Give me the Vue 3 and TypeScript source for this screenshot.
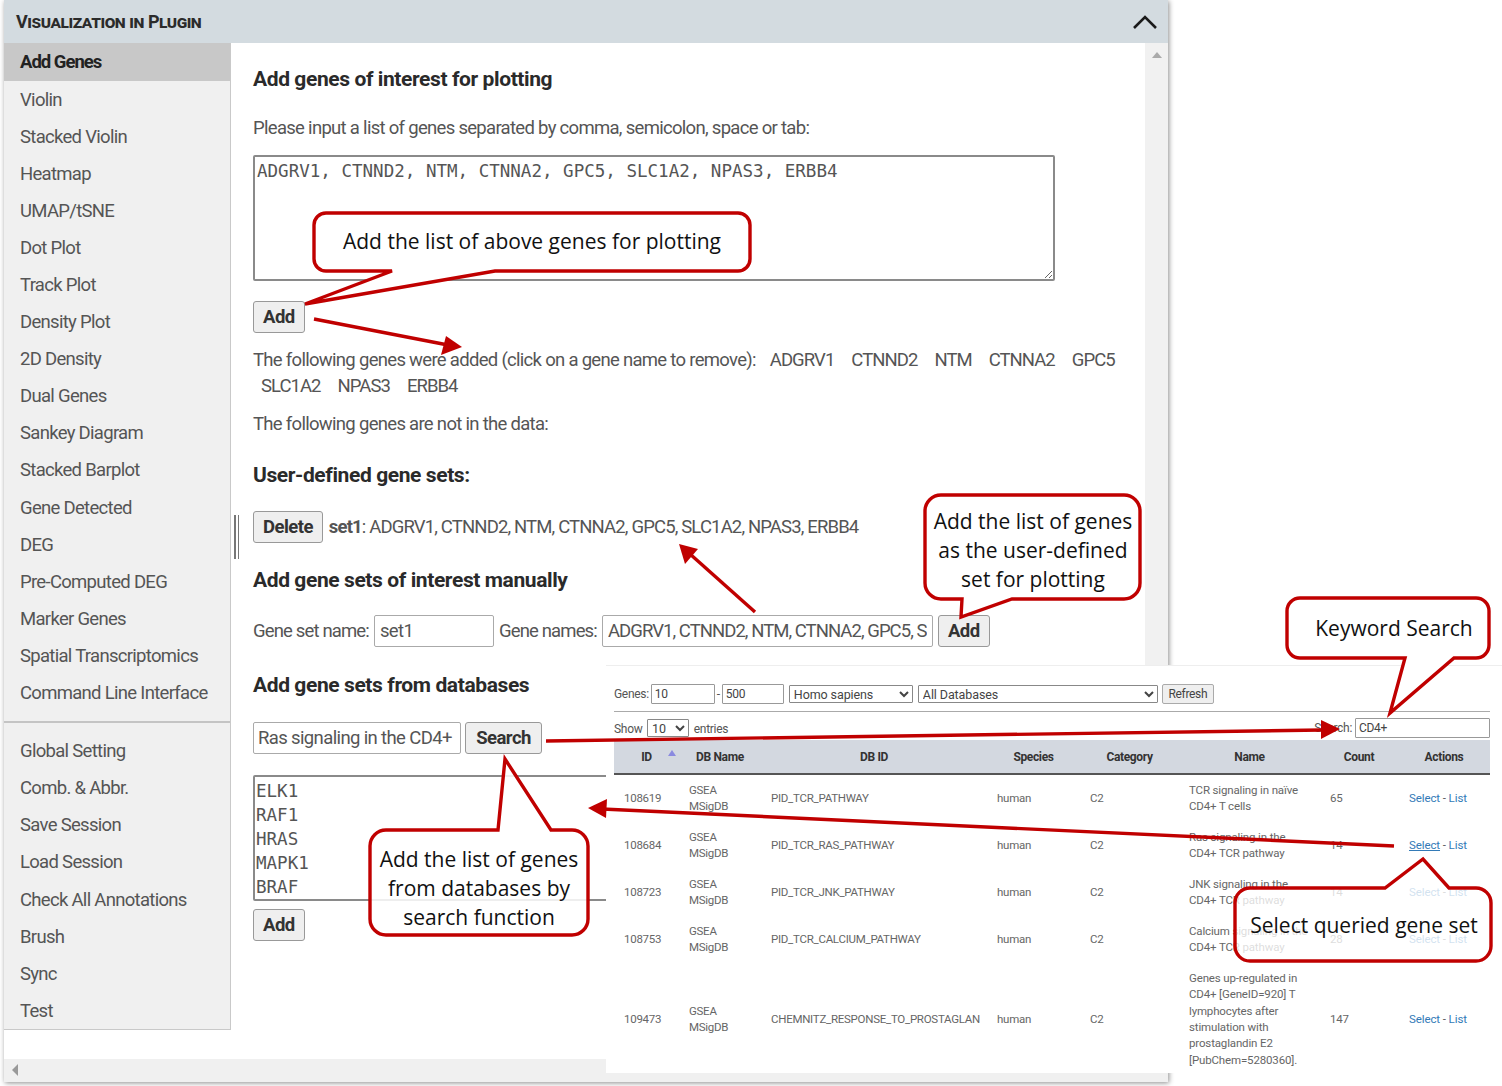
<script setup lang="ts">
const navTop: string[] = ['Violin','Stacked Violin','Heatmap','UMAP/tSNE','Dot Plot','Track Plot','Density Plot','2D Density','Dual Genes','Sankey Diagram','Stacked Barplot','Gene Detected','DEG','Pre-Computed DEG','Marker Genes','Spatial Transcriptomics','Command Line Interface']
const navBottom: string[] = ['Global Setting','Comb. & Abbr.','Save Session','Load Session','Check All Annotations','Brush','Sync','Test']
const headers: string[] = ['ID','DB Name','DB ID','Species','Category','Name','Count','Actions']
interface Row { id: string; dbId: string; name: string[]; count: string; hot?: boolean }
const rows: Row[] = [
  { id: '108619', dbId: 'PID_TCR_PATHWAY', name: ['TCR signaling in naïve', 'CD4+ T cells'], count: '65' },
  { id: '108684', dbId: 'PID_TCR_RAS_PATHWAY', name: ['Ras signaling in the', 'CD4+ TCR pathway'], count: '14', hot: true },
  { id: '108723', dbId: 'PID_TCR_JNK_PATHWAY', name: ['JNK signaling in the', 'CD4+ TCR pathway'], count: '14' },
  { id: '108753', dbId: 'PID_TCR_CALCIUM_PATHWAY', name: ['Calcium signaling in the', 'CD4+ TCR pathway'], count: '28' },
  { id: '109473', dbId: 'CHEMNITZ_RESPONSE_TO_PROSTAGLAN', name: ['Genes up-regulated in', 'CD4+ [GeneID=920] T', 'lymphocytes after', 'stimulation with', 'prostaglandin E2', '[PubChem=5280360].'], count: '147' }
]
const red = '#c00000'
</script>

<template>
  <div class="page">
    <section class="panel">
      <header class="panel-head">
        <span class="panel-title">Visualization in Plugin</span>
        <svg class="chev" width="26" height="16" viewBox="0 0 26 16"><polyline points="2,14 13,3 24,14" fill="none" stroke="#1a1a1a" stroke-width="2.6"/></svg>
      </header>
      <div class="panel-body">
        <aside class="side">
          <nav class="nav">
            <a class="nav-item active">Add Genes</a>
            <a v-for="n in navTop" :key="n" class="nav-item">{{ n }}</a>
            <div class="nav-rule"></div>
            <a v-for="n in navBottom" :key="n" class="nav-item">{{ n }}</a>
          </nav>
        </aside>
        <div class="splitter"><i></i><i></i></div>
        <main class="content">
          <h3 class="h first">Add genes of interest for plotting</h3>
          <p class="p prompt">Please input a list of genes separated by comma, semicolon, space or tab:</p>
          <textarea class="ta ta-main" readonly>ADGRV1, CTNND2, NTM, CTNNA2, GPC5, SLC1A2, NPAS3, ERBB4</textarea>
          <button class="btn add1">Add</button>
          <p class="p added">The following genes were added (click on a gene name to remove):<span class="g g1">ADGRV1</span><span class="g">CTNND2</span><span class="g">NTM</span><span class="g">CTNNA2</span><span class="g">GPC5</span><br><span class="g first-g">SLC1A2</span><span class="g">NPAS3</span><span class="g">ERBB4</span></p>
          <p class="p notin">The following genes are not in the data:</p>
          <h3 class="h ud">User-defined gene sets:</h3>
          <div class="row del"><button class="btn">Delete</button><span class="p tight"><b>set1</b>: ADGRV1, CTNND2, NTM, CTNNA2, GPC5, SLC1A2, NPAS3, ERBB4</span></div>
          <h3 class="h man">Add gene sets of interest manually</h3>
          <div class="row manual">
            <span class="p tight">Gene set name:</span>
            <input class="inp i-name" value="set1" readonly>
            <span class="p tight">Gene names:</span>
            <input class="inp i-genes" value="ADGRV1, CTNND2, NTM, CTNNA2, GPC5, SLC1A2" readonly>
            <button class="btn">Add</button>
          </div>
          <h3 class="h dbh">Add gene sets from databases</h3>
          <div class="row search">
            <input class="inp i-search" value="Ras signaling in the CD4+" readonly>
            <button class="btn btn-search">Search</button>
          </div>
          <textarea class="ta ta-db" readonly>ELK1
RAF1
HRAS
MAPK1
BRAF</textarea>
          <button class="btn add2">Add</button>
        </main>
        <div class="vscroll"><span class="tri-up"></span></div>
      </div>
      <div class="hscroll"><span class="tri-left"></span></div>
    </section>

    <section class="inset">
      <div class="filters">
        <label>Genes:</label><input class="mini w64" value="10" readonly>
        <span>-</span><input class="mini w62" value="500" readonly>
        <select class="sel w124"><option>Homo sapiens</option></select>
        <select class="sel w240"><option>All Databases</option></select>
        <button class="refresh">Refresh</button>
      </div>
      <div class="tools">
        <div class="tools-l">Show <select class="sel w44"><option>10</option></select> entries</div>
        <div class="tools-r">Search: <input class="mini w135" value="CD4+" readonly></div>
      </div>
      <table class="tbl">
        <colgroup>
          <col style="width:65px"><col style="width:82px"><col style="width:226px"><col style="width:93px"><col style="width:99px"><col style="width:141px"><col style="width:78px"><col style="width:92px">
        </colgroup>
        <thead>
          <tr><th v-for="(h, i) in headers" :key="h">{{ h }}<span v-if="i === 0" class="sort"></span></th></tr>
        </thead>
        <tbody>
          <tr v-for="r in rows" :key="r.id">
            <td>{{ r.id }}</td>
            <td>GSEA<br>MSigDB</td>
            <td class="nw">{{ r.dbId }}</td>
            <td>human</td>
            <td>C2</td>
            <td class="nm"><template v-for="(l, i) in r.name" :key="i"><span class="nwl">{{ l }}</span><br></template></td>
            <td>{{ r.count }}</td>
            <td class="act"><a :class="{ hot: r.hot }">Select</a> - <a>List</a></td>
          </tr>
        </tbody>
      </table>
    </section>

    <svg class="marks" width="1502" height="1086" viewBox="0 0 1502 1086">
      <g :fill="red" :stroke="red" stroke-width="3.4">
        <line x1="314" y1="319" x2="448" y2="345"/>
        <polygon points="462,347 446,336 441,355" stroke="none"/>
        <line x1="755" y1="612" x2="690" y2="554"/>
        <polygon points="679,544 698,549 685,564" stroke="none"/>
        <line x1="546" y1="741" x2="1322" y2="730"/>
        <polygon points="1340,729 1321,720 1321,739" stroke="none"/>
        <line x1="1394" y1="846" x2="602" y2="809"/>
        <polygon points="588,808 607,799 606,818" stroke="none"/>
      </g>
      <g fill="#fff" :stroke="red" stroke-width="3.4" stroke-linejoin="miter">
        <path d="M326 213H738a12 12 0 0 1 12 12V259a12 12 0 0 1 -12 12H495L305 304L392 271H326a12 12 0 0 1 -12 -12V225a12 12 0 0 1 12 -12Z"/>
        <path d="M941 495H1124a16 16 0 0 1 16 16V583a16 16 0 0 1 -16 16H1012L961 617L962 599H941a16 16 0 0 1 -16 -16V511a16 16 0 0 1 16 -16Z"/>
        <path d="M1300 598H1476a13 13 0 0 1 13 13V645a13 13 0 0 1 -13 13H1454L1390 713L1405 658H1300a13 13 0 0 1 -13 -13V611a13 13 0 0 1 13 -13Z"/>
        <path fill-opacity=".78" d="M1250 888H1385L1423 859L1449 888H1476a15 15 0 0 1 15 15V946a15 15 0 0 1 -15 15H1250a15 15 0 0 1 -15 -15V903a15 15 0 0 1 15 -15Z"/>
        <path fill-opacity=".85" d="M386 830H498L505 759L551 830H572a16 16 0 0 1 16 16V919a16 16 0 0 1 -16 16H386a16 16 0 0 1 -16 -16V846a16 16 0 0 1 16 -16Z"/>
      </g>
      <g class="note" text-anchor="middle">
        <text x="532" y="249">Add the list of above genes for plotting</text>
        <text x="1033" y="529">Add the list of genes</text>
        <text x="1033" y="558">as the user-defined</text>
        <text x="1033" y="587">set for plotting</text>
        <text x="1394" y="636">Keyword Search</text>
        <text x="1364" y="933">Select queried gene set</text>
        <text x="479" y="867">Add the list of genes</text>
        <text x="479" y="896">from databases by</text>
        <text x="479" y="925">search function</text>
      </g>
    </svg>
  </div>
</template>

<style>
html, body { margin: 0; background: #fff; }
</style>

<style scoped>
.page { position: relative; width: 1502px; height: 1086px; overflow: hidden; font-family: Roboto, "Liberation Sans", sans-serif; color: #555; background: #fff; }
.panel { width: 1164px; height: 1082px; margin-left: 4px; box-shadow: 1px 1px 5px rgba(0,0,0,.45); display: flex; flex-direction: column; background: #fff; }
.panel-head { height: 43px; flex: none; background: #d3dbe0; display: flex; align-items: center; justify-content: space-between; padding: 0 10px 0 12px; box-sizing: border-box; }
.panel-title { font-variant: small-caps; font-weight: 700; font-size: 18px; letter-spacing: -.45px; color: #2b2b2b; }
.panel-body { flex: 1; display: flex; min-height: 0; }
.side { width: 227px; flex: none; background: #fff; }
.nav { background: #f0f0f0; border-right: 1px solid #c9c9c9; border-bottom: 1px solid #c9c9c9; height: 987px; box-sizing: border-box; }
.nav-item { display: flex; align-items: center; height: 37.1px; padding-left: 16px; font-size: 18.5px; letter-spacing: -.7px; color: #555; }
.nav-item.active { background: #c8c8c8; color: #222; font-weight: 700; height: 38px; letter-spacing: -1px; }
.nav-rule { height: 2px; margin: 9.5px 0 9.5px; background: #c4c4c4; }
.splitter { width: 22px; flex: none; display: flex; gap: 2px; padding: 472px 0 0 3px; box-sizing: border-box; }
.splitter i { display: block; width: 1.5px; height: 44px; background: #777; }
.content { flex: 1; min-width: 0; display: flex; flex-direction: column; align-items: flex-start; }
.vscroll { width: 23px; margin-left: -3px; flex: none; background: #f1f1f1; position: relative; }
.tri-up { position: absolute; top: 9px; left: 7px; border: 5px solid transparent; border-top: 0; border-bottom: 6px solid #aaa; }
.hscroll { height: 23px; flex: none; background: #f0f0f0; position: relative; }
.tri-left { position: absolute; top: 5px; left: 8px; border: 6px solid transparent; border-left: 0; border-right: 6px solid #999; }
.h { margin: 0; font-size: 21px; line-height: 26px; font-weight: 700; letter-spacing: -.4px; color: #2a2a2a; }
.p { margin: 0; font-size: 18.5px; line-height: 26px; letter-spacing: -.7px; color: #555; white-space: nowrap; }
.tight { letter-spacing: -.85px; }
.first { margin-top: 23px; }
.prompt { margin-top: 23px; }
.ta { font-family: "DejaVu Sans Mono", monospace; font-size: 17.55px; color: #555; border: 2px solid #8a8a8a; border-radius: 2px; box-sizing: border-box; background: #fff; padding: 4px 2px; margin: 0; outline: none; display: block; }
.ta-main { width: 802px; height: 126px; margin-top: 14px; }
.ta-db { width: 500px; height: 126px; margin-top: 21px; padding: 2px 1px; line-height: 24px; resize: none; overflow: hidden; }
.btn { font-family: Roboto, sans-serif; font-weight: 700; font-size: 18.5px; letter-spacing: -.55px; color: #333; background: #efefef; border: 1.5px solid #999; border-radius: 3px; padding: 0 9px; height: 32px; box-sizing: border-box; margin: 0; }
.btn-search { width: 77px; padding: 0; }
.add1 { margin-top: 20px; }
.add2 { margin-top: 8px; }
.added { margin-top: 14px; }
.g { margin-left: 17px; letter-spacing: -.95px; }
.g1 { margin-left: 14px; }
.first-g { margin-left: 8px; }
.notin { margin-top: 12px; }
.ud { margin-top: 25px; }
.row { display: flex; align-items: center; }
.del { margin-top: 23px; gap: 6px; }
.man { margin-top: 24px; }
.manual { margin-top: 22px; gap: 5px; }
.inp { font-family: Roboto, sans-serif; font-size: 18.5px; letter-spacing: -.63px; color: #555; border: 1.5px solid #aaa; border-radius: 2px; box-sizing: border-box; height: 32px; padding: 0 5px; background: #fff; outline: none; margin: 0; }
.i-name { width: 120px; }
.i-genes { width: 331px; letter-spacing: -.95px; }
.dbh { margin-top: 25px; }
.search { margin-top: 24px; gap: 4px; }
.i-search { width: 208px; padding: 0 4px; }
.inset { position: absolute; left: 606px; top: 665px; width: 896px; height: 408px; background: #fff; box-sizing: border-box; padding: 17px 12px 0 8px; border-top: 1px solid #eee; font-size: 12px; letter-spacing: -.3px; color: #555; }
.filters { display: flex; align-items: center; gap: 2px; height: 22px; padding-bottom: 6px; border-bottom: 1px solid #aaa; }
.mini { font-family: Roboto, sans-serif; font-size: 12px; letter-spacing: -.3px; color: #444; width: 60px; height: 20px; box-sizing: border-box; border: 1px solid #999; padding: 0 3px; border-radius: 1px; outline: none; background: #fff; margin: 0; }
.w64 { width: 64px; }
.w62 { width: 62px; }
.w135 { width: 135px; margin-left: 3px; }
.sel { font-family: Roboto, sans-serif; font-size: 12.5px; letter-spacing: -.1px; color: #444; height: 18px; box-sizing: border-box; border: 1px solid #888; border-radius: 1px; background: #fff; padding: 0; margin: 0 0 0 3px; }
.w124 { width: 124px; }
.w240 { width: 240px; }
.w44 { width: 42px; margin: 0 2px; }
.refresh { font-family: Roboto, sans-serif; font-size: 12px; letter-spacing: -.3px; color: #444; height: 20px; width: 52px; padding: 0; border: 1px solid #aaa; border-radius: 2px; background: #efefef; margin-left: 2px; }
.tools { display: flex; justify-content: space-between; align-items: center; height: 29px; padding-top: 3px; box-sizing: border-box; }
.tools-r { display: flex; align-items: center; }
.tbl { width: 876px; border-collapse: collapse; table-layout: fixed; margin-top: -1px; }
.tbl th { background: #d3d8e0; height: 33px; padding: 0; font-size: 12px; letter-spacing: -.35px; font-weight: 700; color: #333; border-bottom: 2px solid #555; position: relative; }
.sort { display: inline-block; position: absolute; left: 54px; top: 10px; border: 4px solid transparent; border-top: 0; border-bottom: 6px solid #8a8ae0; }
.tbl td { padding: 7.2px 10px; font-size: 11.5px; letter-spacing: -.27px; line-height: 16.3px; color: #666; vertical-align: middle; }
.tbl td.nm { letter-spacing: -.15px; }
.tbl td.act { letter-spacing: -.1px; color: #555; padding-left: 11px; }
.nw { white-space: nowrap; overflow: hidden; }
.nwl { white-space: nowrap; }
.act a { color: #337ab7; }
a.hot { text-decoration: underline; }
.marks { position: absolute; left: 0; top: 0; pointer-events: none; }
.note { font-family: "Open Sans", "Noto Sans", sans-serif; font-size: 21px; fill: #111; }
</style>
